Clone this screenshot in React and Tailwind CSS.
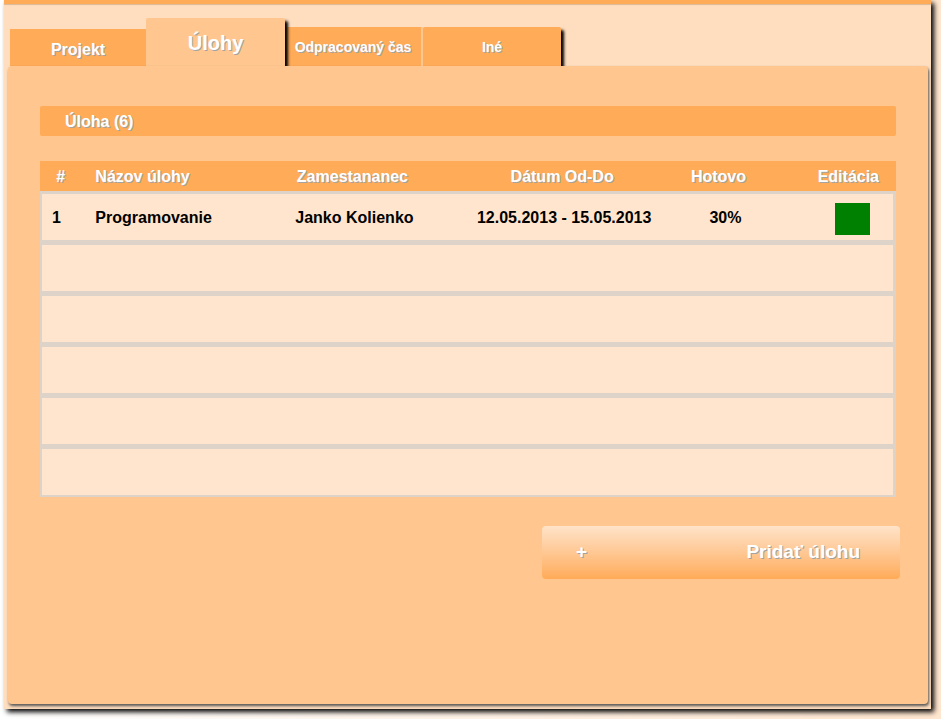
const TEXT_SHADOW = "[text-shadow:1px_1px_0_#a3a3a3]";

const rows = [
  { id: 1, name: "Programovanie", employee: "Janko Kolienko", dates: "12.05.2013 - 15.05.2013", done: "30%" },
  null,
  null,
  null,
  null,
  null,
];

const head = "h-[30px] bg-[#ffab57] p-0 pt-0.5";
const cell = "h-[51px] border-t-3 border-b-2 border-[#ddd3c8] bg-[#ffe5cd] p-0 pt-0.5";

function Tabs() {
  return (
    <nav className="mt-3 flex items-end pl-[6px] font-bold text-white">
      <button type="button" className={`h-[37px] w-[136px] bg-[#ffab57] pt-1 text-base ${TEXT_SHADOW}`}>
        Projekt
      </button>
      <button
        type="button"
        className={`relative z-10 h-12 w-[139px] rounded-t-xs bg-[#ffc78f] pt-0.5 text-xl shadow-[3px_3px_3px_#000] ${TEXT_SHADOW}`}
      >
        Úlohy
      </button>
      <button
        type="button"
        className={`h-[39px] w-[138px] border-r-2 border-[#ffc78f] bg-[#ffab57] text-sm whitespace-nowrap ${TEXT_SHADOW}`}
      >
        Odpracovaný čas
      </button>
      <button
        type="button"
        className={`h-[39px] w-[138px] rounded-t-xs bg-[#ffab57] text-sm shadow-[3px_3px_3px_#000] ${TEXT_SHADOW}`}
      >
        Iné
      </button>
    </nav>
  );
}

function TaskTable() {
  return (
    <table className="mt-[25px] w-full table-fixed border-separate border-spacing-0 text-base font-bold text-black">
      <colgroup>
        <col className="w-[6%]" />
        <col className="w-[17%]" />
        <col className="w-[27%]" />
        <col className="w-[22%]" />
        <col className="w-[15%]" />
        <col className="w-[13%]" />
      </colgroup>
      <thead>
        <tr className={`text-white ${TEXT_SHADOW}`}>
          <th className={`${head} pr-2.5`}>#</th>
          <th className={`${head} pl-1 text-left`}>Názov úlohy</th>
          <th className={head}>Zamestananec</th>
          <th className={head}>Dátum Od-Do</th>
          <th className={`${head} pr-1`}>Hotovo</th>
          <th className={`${head} pl-4`}>Editácia</th>
        </tr>
      </thead>
      <tbody>
        {rows.map((row, i) => (
          <tr key={i}>
            <td className={`${cell} border-l-2`}>{row && <span className="pl-2.5">{row.id}</span>}</td>
            <td className={cell}>{row && <span className="pl-1">{row.name}</span>}</td>
            <td className={`${cell} pl-1 text-center`}>{row?.employee}</td>
            <td className={`${cell} pl-1 text-center whitespace-nowrap`}>{row?.dates}</td>
            <td className={`${cell} text-center`}>{row && <span className="pl-2.5">{row.done}</span>}</td>
            <td className={`${cell} border-r-3`}>
              {row && (
                <div className="flex justify-center pt-0.5 pl-7">
                  <button type="button" aria-label="Editácia" className="h-8 w-[35px] bg-[#008000]" />
                </div>
              )}
            </td>
          </tr>
        ))}
      </tbody>
    </table>
  );
}

export default function App() {
  return (
    <div className="min-h-screen bg-linear-to-r from-white to-[#ffe6cf] pr-[10px] pb-[10px] pl-1 font-['Liberation_Sans',Arial,sans-serif]">
      <div className="bg-[#ffdebf] pb-[5px] shadow-[3px_3px_5px_#000]">
        <header className="h-1 bg-[#ffab57] shadow-[0_1px_1px_#dcb894]" />
        <div className="pt-[2px]">
          <Tabs />
          <main className="relative z-20 mr-[3px] ml-1 min-h-[638px] rounded-sm bg-[#ffc78f] px-8 pt-10 shadow-[1px_2px_3px_#555]">
            <h1
              className={`flex h-[30px] items-center rounded-xs bg-[#ffab57] pt-0.5 pl-[25px] text-base font-bold text-white ${TEXT_SHADOW}`}
            >
              Úloha (6)
            </h1>
            <TaskTable />
            <div className="-mr-1 mt-[29px] flex justify-end">
              <button
                type="button"
                className={`flex h-[53px] w-[358px] items-center justify-between rounded-sm bg-linear-to-b from-[#ffe3c8] to-[#ffab57] pr-10 pl-[34px] text-[19px] font-bold text-white ${TEXT_SHADOW}`}
              >
                <span>+</span>
                <span>Pridať úlohu</span>
              </button>
            </div>
          </main>
        </div>
      </div>
    </div>
  );
}
